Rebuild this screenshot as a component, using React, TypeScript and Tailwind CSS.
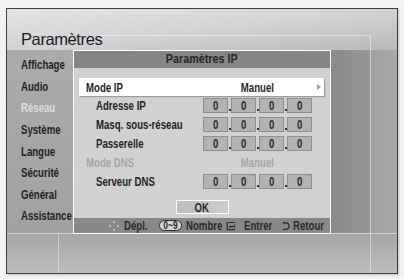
import { Fragment } from "react";

const N = "inline-block whitespace-nowrap origin-left scale-x-[0.74]";
const NC = "inline-block whitespace-nowrap origin-center scale-x-[0.74]";

const menu = [
  "Affichage",
  "Audio",
  "Réseau",
  "Système",
  "Langue",
  "Sécurité",
  "Général",
  "Assistance",
];

function IpBoxes() {
  return (
    <div className="flex h-full">
      {[0, 1, 2, 3].map((i) => (
        <Fragment key={i}>
          {i > 0 && (
            <div className="flex w-[3px] items-end justify-center pb-[2px]">
              <span className="h-[2px] w-[2px] bg-[#2f2f2f]" />
            </div>
          )}
          <div className="flex w-[25px] items-center justify-center border border-[#8e8e8e] bg-[#b3b3b3] text-[13px] font-bold leading-none text-[#2a2a2a]">
            <span className={NC}>0</span>
          </div>
        </Fragment>
      ))}
    </div>
  );
}

function IpRow({ label }: { label: string }) {
  return (
    <div className="flex h-[15px] items-center">
      <div className="w-[129px] shrink-0 pl-[22px] text-[13px] font-bold leading-none text-[#232323]">
        <span className={N}>{label}</span>
      </div>
      <IpBoxes />
    </div>
  );
}

function MoveIcon() {
  return (
    <svg width="12" height="12" viewBox="0 0 12 12" className="shrink-0">
      <g fill="#e6e6e6">
        <path d="M6 1 L7.4 2.6 H4.6 Z" />
        <path d="M6 11 L7.4 9.4 H4.6 Z" />
        <path d="M1 6 L2.6 4.6 V7.4 Z" />
        <path d="M11 6 L9.4 4.6 V7.4 Z" />
      </g>
    </svg>
  );
}

function EnterIcon() {
  return (
    <svg width="10" height="10" viewBox="0 0 10 10" className="shrink-0">
      <g fill="none" stroke="#2a2a2a" strokeWidth="1.2">
        <path d="M9 1.5 H1.2 V8.6 H9" />
        <path d="M8.6 3.6 V5.6 H3.6" />
      </g>
      <path d="M2.8 5.6 L4.6 4.2 V7 Z" fill="#2a2a2a" />
    </svg>
  );
}

function ReturnIcon() {
  return (
    <svg width="8" height="10" viewBox="0 0 8 10" className="shrink-0">
      <path
        d="M2.2 1.8 H3.8 A3.2 3.2 0 0 1 3.8 8.4 H1"
        fill="none"
        stroke="#2a2a2a"
        strokeWidth="1.2"
      />
      <path d="M0.4 1.8 L2.6 0.3 V3.3 Z" fill="#2a2a2a" />
    </svg>
  );
}

function Dialog() {
  return (
    <div className="relative z-10 flex h-[184px] w-[258px] shrink-0 flex-col border border-white bg-[#d1d1d1]">
      <div className="flex h-[17px] items-center justify-center bg-[#858585] text-[12.5px] font-bold leading-none text-[#262626]">
        <span className="inline-block origin-center scale-x-[0.86] whitespace-nowrap">
          Paramètres IP
        </span>
      </div>

      <div className="flex h-[150px] flex-col pt-[10px]">
        <div className="mx-[5px] flex h-[18px] w-[245px] items-center bg-white shadow-[1px_1px_1px_rgba(0,0,0,0.25)]">
          <div className="w-[124px] shrink-0 pl-[7px] text-[13px] font-bold leading-none text-[#1f1f1f]">
            <span className={N}>Mode IP</span>
          </div>
          <div className="w-[109px] shrink-0 text-center text-[13px] font-bold leading-none text-[#2a2a2a]">
            <span className={NC}>Manuel</span>
          </div>
          <svg width="4" height="6" viewBox="0 0 4 6" className="ml-[5px]">
            <path d="M0 0 L4 3 L0 6 Z" fill="#a3a3a3" />
          </svg>
        </div>

        <div className="mt-[2px] flex flex-col gap-[4px]">
          <IpRow label="Adresse IP" />
          <IpRow label="Masq. sous-réseau" />
          <IpRow label="Passerelle" />
          <div className="flex h-[15px] items-center text-[13px] font-bold leading-none text-[#a6a6a6]">
            <div className="w-[129px] shrink-0 pl-[12px]">
              <span className={N}>Mode DNS</span>
            </div>
            <div className="w-[109px] shrink-0 text-center">
              <span className={NC}>Manuel</span>
            </div>
          </div>
          <IpRow label="Serveur DNS" />
        </div>

        <div className="mt-[11px] flex justify-center">
          <div className="flex h-[14px] w-[53px] items-center justify-center border border-white bg-gradient-to-r from-[#bdbdbd] to-[#cbcbcb] text-[13px] font-bold leading-none text-[#2a2a2a]">
            <span className={NC}>OK</span>
          </div>
        </div>
      </div>

      <div className="flex h-[15px] items-center justify-end bg-[#888888] pr-[6px] text-[13px] font-bold leading-none text-[#2b2b2b]">
        <MoveIcon />
        <span className="ml-[4px] w-[23px]">
          <span className={N}>Dépl.</span>
        </span>
        <span className="ml-[12px] flex h-[11px] w-[23px] items-center justify-center rounded-full border border-[#2a2a2a] bg-[#d6d6d6] text-[10px] leading-none">
          <span className="inline-block origin-center scale-x-[0.85] whitespace-nowrap">
            0~9
          </span>
        </span>
        <span className="ml-[4px] w-[36px]">
          <span className={N}>Nombre</span>
        </span>
        <span className="ml-[4px]">
          <EnterIcon />
        </span>
        <span className="ml-[8px] w-[28px]">
          <span className={N}>Entrer</span>
        </span>
        <span className="ml-[10px]">
          <ReturnIcon />
        </span>
        <span className="ml-[3px] w-[31px]">
          <span className={N}>Retour</span>
        </span>
      </div>
    </div>
  );
}

export default function App() {
  return (
    <div className="min-h-screen bg-[#f2f2f2] pl-[6px] pt-[8px] font-['Liberation_Sans',Arial,sans-serif]">
      <div className="relative flex h-[266px] w-[392px] flex-col overflow-hidden border border-[#3e3e3e] shadow-[1px_1px_2px_rgba(0,0,0,0.2)]">
        <div className="pointer-events-none absolute inset-0">
          <div className="absolute left-[93px] top-[26px] h-px w-[270px] bg-white/45" />
          <div className="absolute bottom-0 left-[363px] top-[26px] w-px bg-white/45" />
          <div className="absolute bottom-0 left-[51px] top-[36px] w-px bg-white/40" />
          <div className="absolute left-0 right-0 top-[224px] h-px bg-white/50" />
        </div>

        <div className="h-[41px] shrink-0 bg-gradient-to-br from-[#e3e4e5] via-[#d2d3d4] to-[#b8b9ba] pl-[14px] pt-[19px]">
          <span className="relative z-10 text-[16.5px] leading-none tracking-[-0.4px] text-[#1b1b1b]">
            Paramètres
          </span>
        </div>

        <div className="flex h-[183px] shrink-0">
          <div className="relative z-10 w-[66px] shrink-0 bg-gradient-to-b from-[#ababab] to-[#a1a1a1] pl-[14px] pt-[4px]">
            {menu.map((m) => (
              <div
                key={m}
                className={`flex h-[21.6px] items-center text-[13px] font-bold leading-none ${
                  m === "Réseau" ? "text-[#dedede]" : "text-[#1f1f1f]"
                }`}
              >
                <span className={N}>{m}</span>
              </div>
            ))}
          </div>
          <Dialog />
          <div className="w-[39px] shrink-0 bg-gradient-to-r from-[#8a8a8a] to-[#979797]" />
          <div className="flex-1 bg-gradient-to-r from-[#a0a0a0] to-[#a8a8a8]" />
        </div>

        <div className="flex-1 bg-gradient-to-b from-[#a5a5a5] to-[#bebebe]" />
      </div>
    </div>
  );
}
